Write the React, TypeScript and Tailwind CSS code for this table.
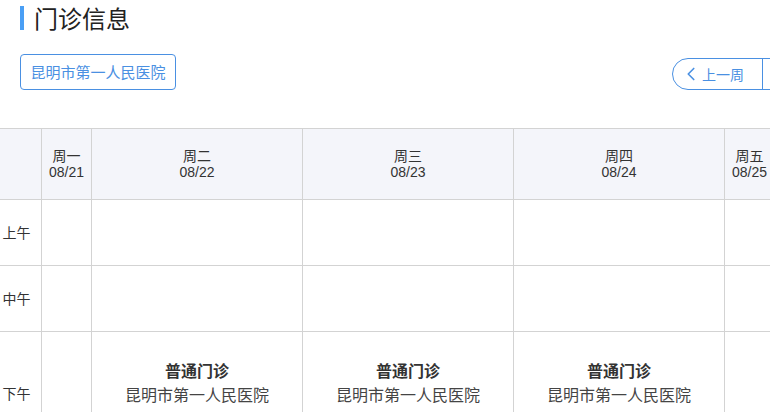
import { ChevronLeft, ChevronRight } from 'lucide-react';

const days = [
  { name: '周一', date: '08/21', w: 'w-[50px]' },
  { name: '周二', date: '08/22', w: 'w-[211px]' },
  { name: '周三', date: '08/23', w: 'w-[211px]' },
  { name: '周四', date: '08/24', w: 'w-[211px]' },
  { name: '周五', date: '08/25', w: 'w-[50px]' },
  { name: '周六', date: '08/26', w: 'w-[50px]' },
];

const periods = [
  { label: '上午', h: 'h-[66px]', slots: [false, false, false, false, false, false] },
  { label: '中午', h: 'h-[66px]', slots: [false, false, false, false, false, false] },
  { label: '下午', h: 'h-[124px]', slots: [false, true, true, true, false, false] },
];

export default function App() {
  return (
    <div
      className="w-[770px] h-[412px] overflow-hidden bg-white text-[#333]"
      style={{ fontFamily: '"Noto Sans CJK SC", "Liberation Sans", sans-serif' }}
    >
      <div className="flex items-center gap-[10px] pl-5 pt-[2px]">
        <div className="w-[4px] h-[24px] bg-[#4a9ff5]" />
        <h1 className="text-[24px] leading-[32px] text-[#222]">门诊信息</h1>
      </div>

      <div className="flex items-end mt-[20px] pl-5">
        <button className="shrink-0 w-[156px] h-[36px] border border-[#4a90e2] rounded-[4px] text-[15px] text-[#4a90e2]">
          昆明市第一人民医院
        </button>
        <div className="shrink-0 flex ml-[496px] h-[32px] border border-[#4a90e2] rounded-full text-[14px] text-[#4a90e2]">
          <button className="w-[90px] flex items-center justify-start border-r border-[#4a90e2] pl-[7px]">
            <ChevronLeft className="w-[22px] h-[22px]" strokeWidth={1.8} />
            上一周
          </button>
          <button className="w-[90px] flex items-center justify-center">
            下一周
            <ChevronRight className="w-[22px] h-[22px]" strokeWidth={1.8} />
          </button>
        </div>
      </div>

      <div className="mt-[38px] -ml-[8px] w-[1100px] border-t border-[#d3d3d3] text-[14px]">
        <div className="flex h-[71px] bg-[#f4f5fa]">
          <div className="w-[50px] shrink-0 border-r border-b border-[#d3d3d3]" />
          {days.map((d) => (
            <div
              key={d.name}
              className={`${d.w} shrink-0 flex flex-col items-center justify-center leading-[17px] border-r border-b border-[#d3d3d3]`}
            >
              <span>{d.name}</span>
              <span style={{ fontFamily: '"Liberation Sans", sans-serif' }}>{d.date}</span>
            </div>
          ))}
        </div>
        {periods.map((p) => (
          <div key={p.label} className={`flex ${p.h}`}>
            <div className="w-[50px] shrink-0 flex items-center justify-center border-r border-b border-[#d3d3d3]">
              {p.label}
            </div>
            {days.map((d, i) => (
              <div
                key={d.name}
                className={`${d.w} shrink-0 flex flex-col items-center pt-[26px] border-r border-b border-[#d3d3d3]`}
              >
                {p.slots[i] && (
                  <>
                    <span className="text-[16px] leading-[24px] font-bold text-[#333]">普通门诊</span>
                    <span className="text-[16px] leading-[24px] text-[#444]">昆明市第一人民医院</span>
                  </>
                )}
              </div>
            ))}
          </div>
        ))}
      </div>
    </div>
  );
}
